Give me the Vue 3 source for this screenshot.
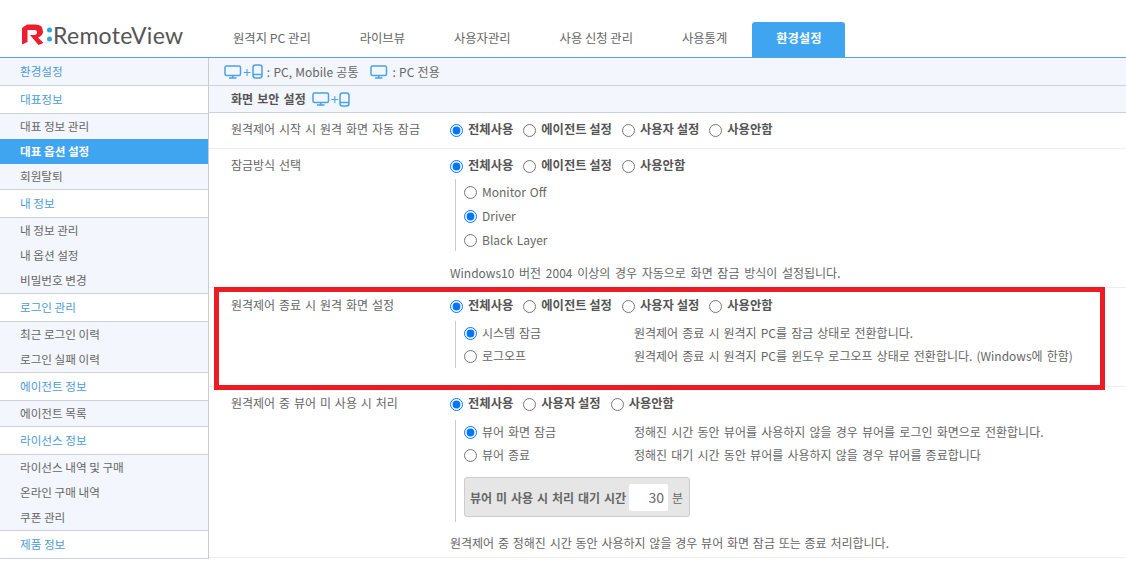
<script setup>
// Sidebar groups
const sideGroups = [
  { title: '대표정보', items: ['대표 정보 관리', '대표 옵션 설정', '회원탈퇴'] },
  { title: '내 정보', items: ['내 정보 관리', '내 옵션 설정', '비밀번호 변경'] },
  { title: '로그인 관리', items: ['최근 로그인 이력', '로그인 실패 이력'] },
  { title: '에이전트 정보', items: ['에이전트 목록'] },
  { title: '라이선스 정보', items: ['라이선스 내역 및 구매', '온라인 구매 내역', '쿠폰 관리'] },
  { title: '제품 정보', items: [] }
];

const tabs = ['원격지 PC 관리', '라이브뷰', '사용자관리', '사용 신청 관리', '사용통계', '환경설정'];

const fourOptions = ['전체사용', '에이전트 설정', '사용자 설정', '사용안함'];
</script>

<template>
  <div class="page">
    <header class="top">
      <div class="logo">
        <svg class="logo-mark" width="33" height="22" viewBox="0 0 33 22">
          <path d="M0 4 L5 0.500 H13.500 Q21 0.500 21 7.500 Q21 11.500 16 13.500 L21.500 19 L16.500 21 L8 11 H12.500 Q15 11 15 8 Q15 6 12.500 6 H5.500 V18 L0 20.500 Z" fill="#ed1c2e" />
          <circle cx="27.500" cy="6" r="2.500" fill="#29a9e1" />
          <circle cx="27.500" cy="15" r="2.500" fill="#29a9e1" />
        </svg>
        <span class="logo-text">RemoteView</span>
      </div>
      <nav class="tabs">
        <a v-for="(t, i) in tabs" :key="t" class="tab" :class="{ active: i === 5 }">{{ t }}</a>
      </nav>
    </header>

    <div class="body">
      <aside class="side">
        <div class="side-title first">환경설정</div>
        <template v-for="g in sideGroups" :key="g.title">
          <div class="side-title">{{ g.title }}</div>
          <ul v-if="g.items.length" class="side-list">
            <li v-for="item in g.items" :key="item" :class="{ on: item === '대표 옵션 설정' }">{{ item }}</li>
          </ul>
        </template>
      </aside>

      <main class="main">
        <div class="legend">
          <svg class="ico" width="18" height="14" viewBox="0 0 18 14"><rect x="1" y="1" width="15.500" height="9.500" rx="1.500" /><path d="M8.750 10.500V13M5 13H12.500" /></svg>
          <span class="plus">+</span>
          <svg class="ico" width="11" height="15" viewBox="0 0 11 15"><rect x="1" y="1" width="9" height="13" rx="2.500" /><path d="M1 10.500H10" /></svg>
          <span class="legend-text">: PC, Mobile 공통</span>
          <svg class="ico gap" width="18" height="14" viewBox="0 0 18 14"><rect x="1" y="1" width="15.500" height="9.500" rx="1.500" /><path d="M8.750 10.500V13M5 13H12.500" /></svg>
          <span class="legend-text">: PC 전용</span>
        </div>
        <div class="section">
          <b>화면 보안 설정</b>
          <svg class="ico" width="18" height="14" viewBox="0 0 18 14"><rect x="1" y="1" width="15.500" height="9.500" rx="1.500" /><path d="M8.750 10.500V13M5 13H12.500" /></svg>
          <span class="plus">+</span>
          <svg class="ico" width="11" height="15" viewBox="0 0 11 15"><rect x="1" y="1" width="9" height="13" rx="2.500" /><path d="M1 10.500H10" /></svg>
        </div>

        <section class="row row1">
          <div class="row-label">원격제어 시작 시 원격 화면 자동 잠금</div>
          <div class="opts">
            <label v-for="(o, i) in fourOptions" :key="o"><input type="radio" name="r1" :checked="i === 0" />{{ o }}</label>
          </div>
        </section>

        <section class="row row2">
          <div class="row-label">잠금방식 선택</div>
          <div>
            <div class="opts">
              <label><input type="radio" name="r2" checked />전체사용</label>
              <label><input type="radio" name="r2" />에이전트 설정</label>
              <label><input type="radio" name="r2" />사용안함</label>
            </div>
            <div class="sub sub-stack">
              <label><input type="radio" name="r2s" />Monitor Off</label>
              <label><input type="radio" name="r2s" checked />Driver</label>
              <label><input type="radio" name="r2s" />Black Layer</label>
            </div>
            <p class="note note2">Windows10 버전 2004 이상의 경우 자동으로 화면 잠금 방식이 설정됩니다.</p>
          </div>
        </section>

        <section class="row row3">
          <div class="row-label">원격제어 종료 시 원격 화면 설정</div>
          <div>
            <div class="opts">
              <label v-for="(o, i) in fourOptions" :key="o"><input type="radio" name="r3" :checked="i === 0" />{{ o }}</label>
            </div>
            <div class="sub sub-desc">
              <div class="desc-row">
                <label><input type="radio" name="r3s" checked />시스템 잠금</label>
                <span>원격제어 종료 시 원격지 PC를 잠금 상태로 전환합니다.</span>
              </div>
              <div class="desc-row">
                <label><input type="radio" name="r3s" />로그오프</label>
                <span>원격제어 종료 시 원격지 PC를 윈도우 로그오프 상태로 전환합니다. (Windows에 한함)</span>
              </div>
            </div>
          </div>
        </section>

        <section class="row row4">
          <div class="row-label">원격제어 중 뷰어 미 사용 시 처리</div>
          <div>
            <div class="opts">
              <label><input type="radio" name="r4" checked />전체사용</label>
              <label><input type="radio" name="r4" />사용자 설정</label>
              <label><input type="radio" name="r4" />사용안함</label>
            </div>
            <div class="sub sub-viewer">
              <div class="desc-row">
                <label><input type="radio" name="r4s" checked />뷰어 화면 잠금</label>
                <span>정해진 시간 동안 뷰어를 사용하지 않을 경우 뷰어를 로그인 화면으로 전환합니다.</span>
              </div>
              <div class="desc-row">
                <label><input type="radio" name="r4s" />뷰어 종료</label>
                <span>정해진 대기 시간 동안 뷰어를 사용하지 않을 경우 뷰어를 종료합니다</span>
              </div>
              <div class="wait-box">
                <b>뷰어 미 사용 시 처리 대기 시간</b>
                <span class="wait-input">30</span>
                <span>분</span>
              </div>
            </div>
            <p class="note note4">원격제어 중 정해진 시간 동안 사용하지 않을 경우 뷰어 화면 잠금 또는 종료 처리합니다.</p>
          </div>
        </section>

        <div class="red-box"></div>
      </main>
    </div>
  </div>
</template>

<style scoped>
.page {
  width: 1126px;
  height: 563px;
  overflow: hidden;
  background: #fff;
  color: #666;
  font-family: "Noto Sans CJK KR", "Noto Sans", sans-serif;
  font-size: 12px;
}

.top {
  display: flex;
  align-items: flex-end;
  height: 57px;
  border-bottom: 1px solid #4fa8d8;
}

.logo {
  display: flex;
  align-items: center;
  width: 187px;
  height: 35px;
  padding: 0 0 5px 22px;
  box-sizing: content-box;
}

.logo-text {
  margin-left: -2px;
  font-family: Lato, sans-serif;
  font-size: 23px;
  letter-spacing: 0.3px;
  color: #555;
  line-height: 24px;
}

.tabs {
  display: flex;
  gap: 1px;
}

.tab {
  height: 35px;
  line-height: 33px;
  padding: 0 24px;
  font-size: 12.300px;
  color: #666;
}

.tab.active {
  background: #3fa5f0;
  color: #fff;
  font-weight: 700;
  border-radius: 3px 3px 0 0;
}

.body {
  display: flex;
}

.side {
  width: 208px;
  height: 501px;
  flex-shrink: 0;
  border-right: 1px solid #ccc;
  font-size: 11.600px;
}

.side-title {
  height: 27px;
  line-height: 27px;
  padding-left: 20px;
  color: #4b9bd8;
  border-bottom: 1px solid #ccd2dc;
}

.side-title.first {
  background: #f3f6fc;
}

.side-list {
  list-style: none;
  margin: 0;
  padding: 0;
  background: #f3f6fc;
  border-bottom: 1px solid #ccd2dc;
}

.side-list li {
  height: 25px;
  line-height: 25px;
  padding-left: 20px;
  color: #666;
}

.side-list li.on {
  background: #3fa5f0;
  color: #fff;
  font-weight: 700;
}

.main {
  position: relative;
  flex: 1;
  min-width: 0;
}

.legend {
  display: flex;
  align-items: center;
  height: 27px;
  padding-left: 15px;
  background: #f3f6fc;
  border-bottom: 1px solid #ccd2dc;
  line-height: 25px;
}

.section {
  display: flex;
  align-items: center;
  height: 26px;
  padding-left: 22px;
  background: #f3f6fc;
  border-bottom: 1px solid #ccd2dc;
  line-height: 24px;
}

.section b {
  margin-right: 6px;
  color: #555;
  word-spacing: 1.5px;
}

.ico {
  fill: none;
  stroke: #4aa3e2;
  stroke-width: 1.500;
  flex-shrink: 0;
}

.ico.gap {
  margin-left: 12px;
}

.plus {
  margin: 0 1px;
  color: #4aa3e2;
  font-size: 14px;
  line-height: 14px;
}

.legend-text {
  margin-left: 4px;
  word-spacing: 0.6px;
}

.row {
  display: flex;
  align-items: flex-start;
  border-bottom: 1px solid #eee;
  box-sizing: border-box;
  padding-left: 22px;
}

.row1 { height: 36px; padding-top: 7px; }
.row2 { height: 139px; padding-top: 7px; }
.row3 { height: 99px; padding-top: 8px; }
.row4 { height: 171px; padding-top: 7px; }

.row-label {
  width: 219px;
  flex-shrink: 0;
  line-height: 18px;
  word-spacing: 1.2px;
}

.opts {
  display: flex;
  line-height: 18px;
  font-size: 12.300px;
  font-weight: 700;
  color: #555;
}

.opts label,
.sub label {
  display: flex;
  align-items: center;
}

.opts input,
.sub input {
  width: 13px;
  height: 13px;
  margin: 2px 5px 0 0;
  flex-shrink: 0;
}

.opts label {
  margin-right: 10px;
}

.sub {
  margin: 0 0 0 5px;
  padding-left: 8px;
  border-left: 1px solid #ccc;
}

.sub label {
  width: 170px;
  height: 24px;
  word-spacing: 1.2px;
}

.sub-stack {
  margin-top: 5px;
  height: 72px;
  box-sizing: border-box;
}

.sub-desc {
  margin-top: 7px;
  height: 47px;
}

.sub-desc span {
  word-spacing: 1.4px;
}

.sub-viewer {
  margin-top: 8px;
  height: 102px;
}

.sub-viewer .desc-row span {
  word-spacing: 1.5px;
}

.desc-row {
  display: flex;
  align-items: center;
  height: 23px;
}

.wait-box {
  display: flex;
  align-items: center;
  width: 226px;
  height: 40px;
  margin-top: 11px;
  padding-left: 5px;
  box-sizing: border-box;
  background: #e6e6e6;
  border: 1px solid #ccc;
  border-radius: 3px;
}

.wait-box b {
  word-spacing: 1.2px;
  white-space: nowrap;
}

.wait-input {
  width: 39px;
  height: 27px;
  margin: 0 4px 0 3px;
  box-sizing: border-box;
  padding-right: 4px;
  background: #fff;
  border-radius: 2px;
  text-align: right;
  line-height: 27px;
  font-size: 14px;
}

.note {
  margin: 0;
  line-height: 18px;
}

.note2 { margin-top: 13px; word-spacing: 2px; }
.note4 { margin-top: 12px; word-spacing: 1.1px; }

.red-box {
  position: absolute;
  left: 5px;
  top: 229px;
  width: 891px;
  height: 103px;
  box-sizing: border-box;
  border: 5px solid #ed1c24;
}
</style>

<style>
body {
  margin: 0;
}
</style>
